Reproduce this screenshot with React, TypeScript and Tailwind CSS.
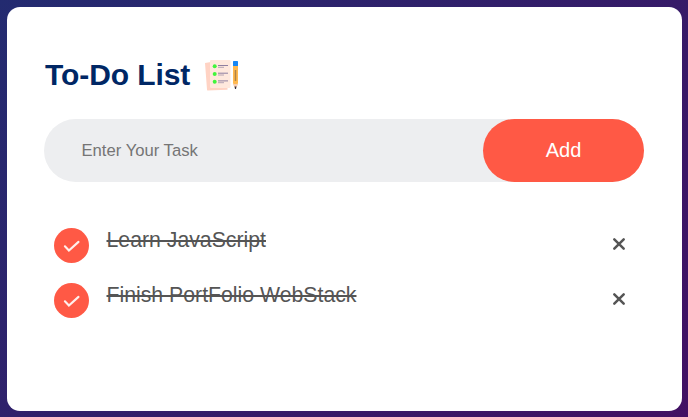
const tasks = ["Learn JavaScript", "Finish PortFolio WebStack"];

function ListIcon() {
  return (
    <svg className="mt-[2px] h-[38px] w-[38px]" viewBox="0 0 38 38" aria-hidden="true">
      <path d="M2 6 8 5 11 31 24.5 31 24.5 32.7 4.5 33.5Q4 33.5 4 32.5Z" fill="#ffd3c4" />
      <rect x="7" y="3" width="20.5" height="28" rx="1.2" fill="#ffe8dd" />
      {[9.3, 17, 24.7].map((y) => (
        <g key={y}>
          <circle cx="11.7" cy={y} r="2" fill="#40f53d" />
          <path d={`M15 ${y - 0.8}h10`} stroke="#8f7fa0" strokeWidth="1" />
          <path d={`M15 ${y + 1}h6`} stroke="#b6a3b4" strokeWidth="1" />
        </g>
      ))}
      <path d="M30 9h5v17l-1.5 4h-2L30 26Z" fill="#ffb84f" />
      <path d="M30 27h5l-1.5 3.5h-2Z" fill="#f5cdb5" />
      <path d="M31.5 29.5h2l-.5 2.5h-1Z" fill="#302d3d" />
      <rect x="30" y="4" width="5" height="5" rx=".6" fill="#1687f5" />
      <path d="M32.5 13v11" stroke="#b08446" strokeWidth="1.5" />
    </svg>
  );
}

function CheckIcon() {
  return (
    <svg className="h-[35px] w-[35px] shrink-0" viewBox="0 0 35 35" aria-hidden="true">
      <circle cx="17.5" cy="17.5" r="17.5" fill="#ff5945" />
      <path d="m10.9 18.3 4 4.2L24.5 13.9" fill="none" stroke="#fff0ec" strokeWidth="2.1" strokeLinecap="round" strokeLinejoin="miter" />
    </svg>
  );
}

export default function App() {
  return (
    <div className="h-[417px] w-[688px] overflow-hidden bg-linear-[135deg,#232b70,#421063] pt-[7px] pl-[7px] font-['Liberation_Sans',Arial,sans-serif]">
      <main className="h-[404px] w-[675px] rounded-[13px] bg-white pt-[49px] pl-[37px]">
        <header className="flex h-[38px] items-center">
          <h1 className="ml-px w-[158px] text-[30px] leading-[38px] font-bold tracking-[-0.08px] whitespace-nowrap text-[#002765]">To-Do List</h1>
          <ListIcon />
        </header>
        <form className="mt-[25px] flex h-[63px] w-[600px] rounded-full bg-[#edeef0]" onSubmit={(e) => e.preventDefault()}>
          <input className="min-w-0 flex-1 bg-transparent pt-[2px] pl-[37.5px] text-[16.67px] outline-none placeholder:text-[#757575]" placeholder="Enter Your Task" />
          <button className="w-[161px] rounded-full bg-[#ff5945] pb-[2px] text-[20px] text-white">Add</button>
        </form>
        <ul className="mt-[46px] ml-[10px] w-[580px]">
          {tasks.map((task) => (
            <li key={task} className="flex h-[55px] items-start">
              <CheckIcon />
              <span className="ml-[17.5px] flex-1 text-[21.25px] leading-[24px] text-[#555] line-through decoration-2">{task}</span>
              <button className="mt-[9px] mr-[8px] h-[14px] w-[14px]" aria-label="Remove">
                <svg className="h-[14px] w-[14px]" viewBox="0 0 14 14">
                  <path d="m2.3 2.3 9.4 9.4M11.7 2.3 2.3 11.7" stroke="#555" strokeWidth="2.5" strokeLinecap="round" />
                </svg>
              </button>
            </li>
          ))}
        </ul>
      </main>
    </div>
  );
}
